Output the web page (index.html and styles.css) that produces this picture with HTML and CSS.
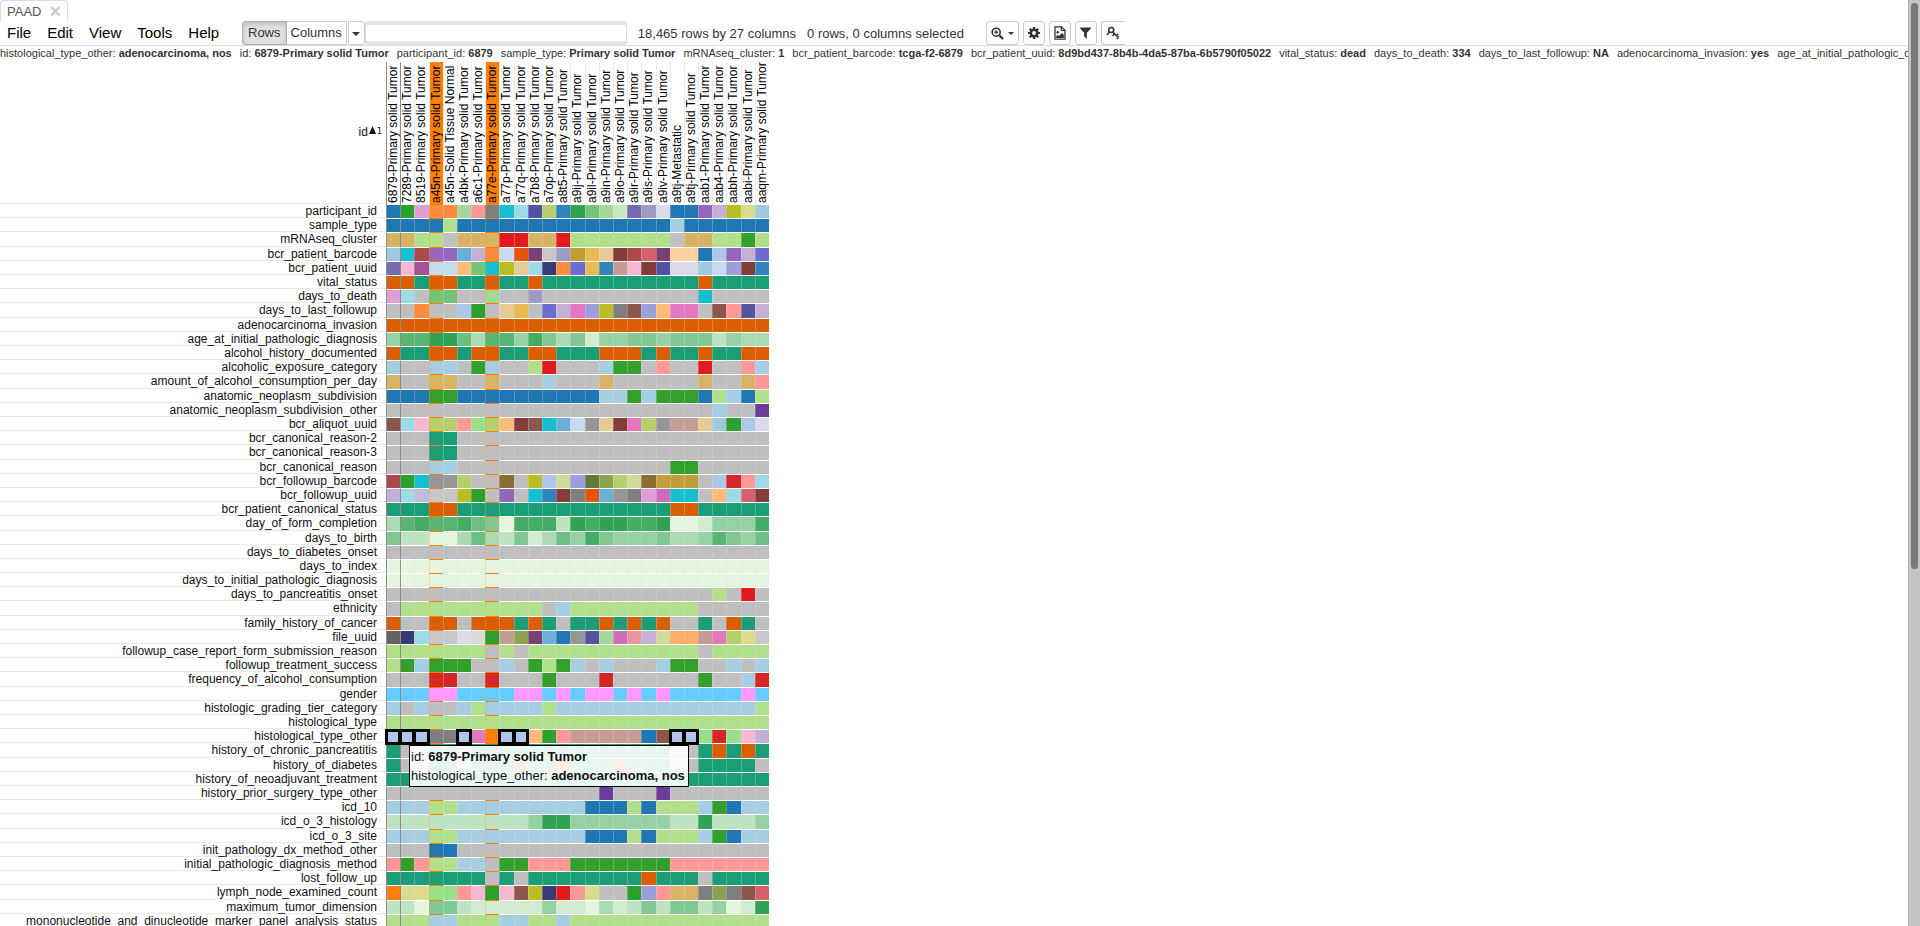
FILE: index.html
```html
<!DOCTYPE html>
<html lang="en">
<head>
<meta charset="utf-8">
<title>PAAD</title>
<link rel="stylesheet" href="styles.css">
</head>
<body>
<div class="app">
  <main class="workspace">
    <nav class="tabs">
      <div class="tab"><a href="#paad">PAAD</a><button class="tab-close" type="button" aria-label="Close tab">×</button></div>
    </nav>
    <header class="toolbar">
      <nav class="menu">
        <a href="#file">File</a><a href="#edit">Edit</a><a href="#view">View</a><a href="#tools">Tools</a><a href="#help">Help</a>
      </nav>
      <div class="search">
        <div class="toggle"><button type="button" class="active">Rows</button><button type="button">Columns</button></div>
        <button type="button" class="more" aria-label="Search options"><span class="caret"></span></button>
        <input type="text" class="query" aria-label="Search rows">
      </div>
      <p class="status"><span>18,465 rows by 27 columns</span><span>0 rows, 0 columns selected</span></p>
      <div class="actions">
        <button type="button" class="wide" aria-label="Zoom">
          <svg viewBox="0 0 14 14" width="13" height="13"><circle cx="5.6" cy="5.6" r="4.3" fill="none" stroke="#333" stroke-width="1.7"/><path d="M9 9l4 4" stroke="#333" stroke-width="2.4"/><path d="M3.4 5.6h4.4M5.6 3.4v4.4" stroke="#333" stroke-width="1.3"/></svg>
          <span class="caret"></span>
        </button>
        <button type="button" aria-label="Options">
          <svg viewBox="0 0 14 14" width="12" height="12"><circle cx="7" cy="7" r="3.7" fill="none" stroke="#333" stroke-width="3"/><path d="M7 0v3M7 11v3M0 7h3M11 7h3M2 2l2.2 2.2M9.8 9.8L12 12M12 2L9.8 4.2M4.2 9.8L2 12" stroke="#333" stroke-width="2.6"/></svg>
        </button>
        <button type="button" aria-label="Save image">
          <svg viewBox="0 0 12 14" width="12" height="14"><path d="M1 .8h6.5L11 4.300v8.900H1z" fill="#fff" stroke="#333" stroke-width="1.300"/><path d="M7.300.8v3.700H11" fill="none" stroke="#333" stroke-width="1.200"/><circle cx="3.700" cy="6.300" r="1.200" fill="#333"/><path d="M2.300 12v-1.800l1.500-1.400 1.200 1.200 3-3 1.800 1.800V12z" fill="#333"/></svg>
        </button>
        <button type="button" aria-label="Filter">
          <svg viewBox="0 0 12 13" width="11" height="12"><path d="M.3.500h11.400v1.300L7.500 6.200V12.800L4.500 10.300V6.200L.3 1.800z" fill="#333"/></svg>
        </button>
        <button type="button" class="last" aria-label="Color key">
          <svg viewBox="0 0 14 14" width="14" height="14"><circle cx="5.200" cy="4" r="2.500" fill="none" stroke="#333" stroke-width="1.600"/><path d="M3.600 5.800L1 9M6.600 5.800l6 5.800M10.400 9.600l2-1.800M8.300 8l-1.800 1.900M12.400 11.400l-1.400 1.700" fill="none" stroke="#333" stroke-width="1.600"/></svg>
        </button>
      </div>
    </header>
    <div class="details">
      <span>histological_type_other: <b>adenocarcinoma, nos</b></span>
      <span>id: <b>6879-Primary solid Tumor</b></span>
      <span>participant_id: <b>6879</b></span>
      <span>sample_type: <b>Primary solid Tumor</b></span>
      <span>mRNAseq_cluster: <b>1</b></span>
      <span>bcr_patient_barcode: <b>tcga-f2-6879</b></span>
      <span>bcr_patient_uuid: <b>8d9bd437-8b4b-4da5-87ba-6b5790f05022</b></span>
      <span>vital_status: <b>dead</b></span>
      <span>days_to_death: <b>334</b></span>
      <span>days_to_last_followup: <b>NA</b></span>
      <span>adenocarcinoma_invasion: <b>yes</b></span>
      <span>age_at_initial_pathologic_diagnosis</span>
    </div>
    <section class="heatmap">
      <table class="grid" id="grid"></table>
      <div class="tooltip" role="tooltip">
        <div>id: <b>6879-Primary solid Tumor</b></div>
        <div>histological_type_other: <b>adenocarcinoma, nos</b></div>
      </div>
    </section>
  </main>
  <div class="scrollbar"><div class="thumb"></div></div>
</div>
<script src="heatmap.js"></script>
</body>
</html>
```
FILE: styles.css
```css
* { box-sizing: border-box; }
body {
  margin: 0;
  background: #fff;
  color: #333;
  font-family: "Liberation Sans", Arial, sans-serif;
  font-size: 13px;
}
a { color: inherit; text-decoration: none; }
button, input { font: inherit; color: inherit; }
button { padding: 0; cursor: pointer; }

.app { display: flex; height: 100vh; overflow: hidden; }
.workspace { flex: 1; min-width: 0; overflow: hidden; }

.scrollbar { width: 12px; padding: 3px 2px; background: #c4c4c4; border-left: 1px solid #b0b0b0; }
.thumb { width: 7px; height: 61.5%; border-radius: 4px; background: #767a7b; }

.tabs { display: flex; height: 21px; }
.tab {
  display: flex;
  align-items: center;
  gap: 8px;
  padding: 0 6px;
  border: 1px solid #ddd;
  border-bottom: 0;
  border-radius: 4px 4px 0 0;
  color: #555;
}
.tab-close { border: 0; background: none; color: #ccc; font-size: 20px; font-weight: bold; line-height: 19px; }

.toolbar { display: flex; align-items: center; height: 25px; border-bottom: 1px solid #ddd; }
.menu { display: flex; gap: 16px; padding: 0 0 2px 7px; width: 242px; color: #000; font-size: 15px; }
.search { display: flex; height: 24px; }
.toggle { display: flex; }
.toggle button, .more, .actions button { border: 1px solid #ccc; background: #fff; }
.toggle button { padding: 0 5px 1px; }
.toggle button + button { border-left: 0; padding: 0 4px 1px; }
.toggle .active { border-color: #adadad; border-radius: 3px 0 0 3px; background: #e0e0e0; box-shadow: inset 0 2px 4px #bbb; }
.more { width: 17px; margin-left: 1px; border-radius: 0 3px 3px 0; }
.caret { display: inline-block; border: 4px solid transparent; border-top-color: #333; border-bottom: 0; vertical-align: middle; }
.query {
  width: 262px;
  padding: 0 6px;
  border: 1px solid #ddd;
  border-top: 4px solid #e4e4e4;
  border-bottom: 4px solid #e4e4e4;
  border-radius: 3px;
  outline: 0;
}
.status { display: flex; gap: 11px; width: 348px; margin: 0 0 0 11px; white-space: nowrap; }
.actions { display: flex; gap: 4px; }
.actions button { display: flex; align-items: center; justify-content: center; gap: 4px; width: 22px; height: 24px; border-radius: 3px; }
.actions .wide { width: 33px; }
.actions .last { width: 24px; border-right: 0; border-radius: 3px 0 0 3px; }
.actions .caret { border-width: 3px; border-bottom: 0; }

.details { display: flex; gap: 8px; height: 16px; overflow: hidden; font-size: 11px; line-height: 15px; white-space: nowrap; }

.heatmap { position: relative; color: #111; font-size: 12px; }
.grid {
  display: grid;
  grid-template-columns: 386px repeat(27, minmax(0, 1fr));
  grid-template-rows: 143px repeat(51, minmax(0, 1fr));
  width: 769px;
  height: 867px;
}
.grid thead, .grid tbody, .grid tr { display: contents; }
.grid th { padding: 0; font-weight: normal; white-space: nowrap; }
.grid td { padding: 0; border-left: 1px solid rgba(225, 225, 225, 0.3); border-bottom: 1px solid #fff; }
.grid td.picked { border-bottom-color: #ff8000; border-left-color: rgba(255, 160, 80, 0.35); }
.grid .edge { border-left: 1px solid #8c8c8c; }

.grid .corner {
  display: flex;
  align-items: center;
  justify-content: flex-end;
  gap: 1px;
  margin-bottom: 1px;
  padding: 0 4px 2px 0;
  border-bottom: 1px solid #ebebeb;
}
.arrow { width: 7px; height: 8px; margin-bottom: 4px; fill: #111; }
.corner small { font-family: "DejaVu Sans", sans-serif; font-size: 8px; }
.column { overflow: hidden; border-left: 1px solid #ebebeb; color: #000; text-align: left; }
.column span { display: block; height: 141px; writing-mode: vertical-rl; transform: rotate(180deg); line-height: 13px; }
.column.picked { background: #ff8000; }
.row { margin-bottom: 1px; border-bottom: 1px solid #ebebeb; text-align: right; line-height: 12px; }
.grid .row { padding-right: 9px; }
.grid td.match { position: relative; outline: 3px solid #000; outline-offset: -2px; }

.tooltip {
  position: absolute;
  top: 683px;
  left: 409px;
  padding: 1px 3px 1px 1px;
  border: 1px solid #000;
  background: rgba(255, 255, 255, 0.9);
  color: #111;
  font-size: 13px;
  line-height: 19px;
  white-space: nowrap;
  z-index: 2;
}
```
FILE: heatmap.js
```js
// Category colours, one character each; digits 0-9 are steps of the green scale.
const colors = {
  g: '#bfbfbf', B: '#1f77b4', G: '#33a02c', L: '#b2df8a', A: '#a6cee3', T: '#1b9e77', O: '#d95f02',
  R: '#e31a1c', r: '#ff9896', t: '#d8b365', P: '#6a3d9a', k: '#ff99ff', b: '#66ccff', D: '#d62728',
  a: '#9edae5', c: '#17becf', f: '#fd8d3c', h: '#98df8a', j: '#7f7f7f', l: '#5254a3', m: '#b5cf6b',
  n: '#3182bd', o: '#31a354', p: '#74c476', q: '#a1d99b', s: '#c7e9c0', u: '#756bb1', v: '#9e9ac8',
  w: '#dadaeb', x: '#9467bd', y: '#c5b0d5', z: '#bcbd22', C: '#dbdb8d', E: '#9ecae1', F: '#ad494a',
  H: '#6baed6', I: '#c6dbef', J: '#e6550d', K: '#7b4173', M: '#c7c7c7', N: '#bd9e39', Q: '#e7ba52',
  S: '#e7cb94', U: '#843c39', V: '#d6616b', W: '#fdd0a2', X: '#aec7e8', Y: '#6b6ecf', Z: '#f7b6d2',
  i: '#a55194', d: '#de9ed6', e: '#ffbb78', '!': '#393b79', '@': '#c49c94', '#': '#e377c2',
  $: '#8c564b', '%': '#9c9ede', '*': '#2ca02c', '(': '#637939', ')': '#8ca252', '-': '#cedb9c',
  '+': '#8c6d31', '=': '#969696', '/': '#ce6dbd', '?': '#d9d9d9', '~': '#bcbddc', ':': '#636363',
  ';': '#e7969c', ',': '#fdae6b', '.': '#ff7f0e'
};
const low = [229, 245, 224], high = [49, 163, 84];
for (let i = 0; i < 10; i++) {
  colors[i] = 'rgb(' + low.map((v, k) => Math.round(v + (high[k] - v) * i / 9)).join(',') + ')';
}

const tumor = '-Primary solid Tumor';
const columns = [
  '6879' + tumor, '7289' + tumor, '8519' + tumor, 'a45n' + tumor, 'a45n-Solid Tissue Normal',
  'a4bk' + tumor, 'a6c1' + tumor, 'a77e' + tumor, 'a77p' + tumor, 'a77q' + tumor, 'a7b8' + tumor,
  'a7op' + tumor, 'a8t5' + tumor, 'a9ij' + tumor, 'a9il' + tumor, 'a9in' + tumor, 'a9io' + tumor,
  'a9ir' + tumor, 'a9is' + tumor, 'a9iv' + tumor, 'a9tj-Metastatic', 'a9tj' + tumor,
  'aab1' + tumor, 'aab4' + tumor, 'aabh' + tumor, 'aabi' + tumor, 'aaqm' + tumor
];
const picked = [3, 7];

// "X{n}" repeats a colour n times.
const rows = [
  ['participant_id', 'B*dffqrjcalmnopqsuvwBBxyzCE'],
  ['sample_type', 'B{4}LB{15}AB{6}'],
  ['mRNAseq_cluster', 'ttLLgtttRRttRL{7}gttLLGL'],
  ['bcr_patient_barcode', 'EcFxxHyfIJKMvNQSUFVKWWBXxyY'],
  ['bcr_patient_uuid', 'uZiIIepczSa!fYQn@ZUlwwEI%Un'],
  ['vital_status', 'OOTOOTTOTTOT{11}OT{4}'],
  ['days_to_death', 'dagppggqggvg{11}cg{4}'],
  ['days_to_last_followup', 'ggfggX*gSQgYy#%zj$%e##g$rly'],
  ['adenocarcinoma_invasion', 'O{27}'],
  ['age_at_initial_pathologic_diagnosis', '477996377485351445545552433'],
  ['alcohol_history_documented', 'OTTOOTOOTTOOTTTOOOTOTTOTTOO'],
  ['alcoholic_exposure_category', 'AggAAgGAggLRgggAGGgrggRggrA'],
  ['amount_of_alcohol_consumption_per_day', 'tggttggtgggAgggtg{6}tggtr'],
  ['anatomic_neoplasm_subdivision', 'BBBGGB{10}AAGAGGGBLABL'],
  ['anatomic_neoplasm_subdivision_other', 'g{23}AggP'],
  ['bcr_aliquot_uuid', '$aZmmrhmeU$cHI=SU#m=@@SE*Xw'],
  ['bcr_canonical_reason-2', 'gggTTg{22}'],
  ['bcr_canonical_reason-3', 'gggTTg{22}'],
  ['bcr_canonical_reason', 'gggAAg{15}GGg{5}'],
  ['bcr_followup_barcode', 'F*c==mgg+gzX-%()m-+NNNgXDra'],
  ['bcr_followup_uuid', 'ya~MMz*gxgcnUjJH=jd/ccgeaVU'],
  ['bcr_patient_canonical_status', 'TTTOOT{15}OOT{5}'],
  ['day_of_form_completion', '378778650888298998890014448'],
  ['days_to_birth', '522003632513648544453347546'],
  ['days_to_diabetes_onset', 'g{27}'],
  ['days_to_index', '0{27}'],
  ['days_to_initial_pathologic_diagnosis', '0{27}'],
  ['days_to_pancreatitis_onset', 'g{23}LgRg'],
  ['ethnicity', 'gL{10}gAL{9}g{5}'],
  ['family_history_of_cancer', 'OggOOgOOOTOTgTTOTOTOggTgOTg'],
  ['file_uuid', ':!aMMw?*@)KHB=lq/;y-,,@#mCM'],
  ['followup_case_report_form_submission_reason', 'L{7}gLgL{12}gL{4}'],
  ['followup_treatment_success', 'LGAGGGggAgGLGAgAgggAGGggAgA'],
  ['frequency_of_alcohol_consumption', 'gggDDggDgggGgggDg{6}GggAD'],
  ['gender', 'bbbkkbbbbkkbkbkkbkbkb{5}kb'],
  ['histologic_grading_tier_category', 'AgAggALAAAALA{14}L'],
  ['histological_type', 'L{27}'],
  ['histological_type_other', 'XXXjjX#.XXe*r@{5}B$XXhDhZy', 'X'],
  ['history_of_chronic_pancreatitis', 'TggTTgT{14}ggTOTOT'],
  ['history_of_diabetes', 'TggTTgTTTOTTOTTTOTTTggTTTTg'],
  ['history_of_neoadjuvant_treatment', 'T{27}'],
  ['history_prior_surgery_type_other', 'g{15}PgggPg{7}'],
  ['icd_10', 'AAALLA{9}BBBLBLLLAGBAA'],
  ['icd_o_3_histology', '2{10}4994{7}2292224'],
  ['icd_o_3_site', 'AAALLA{9}BBBLBLLLAGBAA'],
  ['init_pathology_dx_method_other', 'gggBBg{22}'],
  ['initial_pathologic_diagnosis_method', 'rGrLLAAgGGrrrG{7}r{7}'],
  ['lost_follow_up', 'T{7}gTgT{8}OTTTgT{4}'],
  ['lymph_node_examined_count', '.CChhrZ*Z$z!RrCgg*%rttj)j$V'],
  ['maximum_tumor_dimension', '220552111114110312525524019'],
  ['mononucleotide_and_dinucleotide_marker_panel_analysis_status', 'LLLAALLLAALLAL{14}']
];

const columnClass = i => (picked.includes(i) ? ' picked' : '') + (i < 2 ? ' edge' : '');
const head = columns.map((name, i) =>
  `<th scope="col" class="column${columnClass(i)}"><span>${name}</span></th>`).join('');
const body = rows.map(([name, code, match]) => {
  const cells = [...code.replace(/(.)\{(\d+)\}/g, (m, c, n) => c.repeat(n))];
  return `<tr><th scope="row" class="row">${name}</th>` + cells.map((c, i) =>
    `<td class="${(c === match ? 'match' : '') + columnClass(i)}" style="background-color:${colors[c]}"></td>`
  ).join('') + '</tr>';
}).join('');

document.getElementById('grid').innerHTML =
  `<thead><tr><th class="corner">id<svg class="arrow" viewBox="0 0 7 8"><path d="M3.500 0L7 8H0z"/></svg><small>1</small></th>${head}</tr></thead><tbody>${body}</tbody>`;
```
